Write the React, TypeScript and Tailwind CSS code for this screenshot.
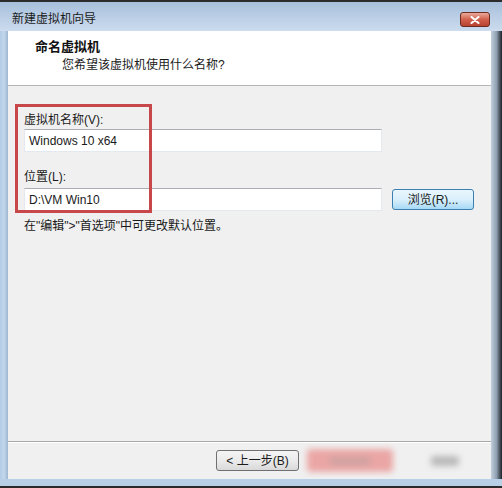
import React from "react";

const font = "font-['Liberation_Sans','Noto_Sans_CJK_SC',sans-serif]";

const TextBox = ({ value }: { value: string }) => (
  <div className="h-[23px] w-[358px] bg-white border border-[#e3e9ef] border-t-[#abadb3] flex items-center pl-[4px] text-[12px] text-[#1a1a1a]">
    {value}
  </div>
);

const App = () => {
  return (
    <div className={`w-[502px] h-[488px] flex flex-col bg-[#f0f0f0] ${font}`}>
      {/* title bar */}
      <div className="h-[31px] border-t-2 border-[#2b2b2b] bg-gradient-to-b from-[#a7bfdc] to-[#cddcee] flex items-center justify-between pl-[12px] pr-[12px]">
        <span className="text-[12px] text-[#1b1b1b] mt-[4px]">新建虚拟机向导</span>
        <div className="w-[30px] h-[15px] mt-[6px] rounded-[3px] border border-[#6e2b22] bg-gradient-to-b from-[#e9a999] via-[#d0604c] to-[#b8432f] flex items-center justify-center">
          <svg width="10" height="8" viewBox="0 0 10 8">
            <path d="M1.5 1 L8.5 7 M8.5 1 L1.5 7" stroke="#ffffff" strokeWidth="2" strokeLinecap="round" />
          </svg>
        </div>
      </div>

      <div className="flex-1 flex">
        {/* left frame */}
        <div className="w-[8px] bg-gradient-to-r from-[#b3cbe6] via-[#c3d7ec] to-[#9fb6d2]" />

        <div className="flex-1 flex flex-col">
          {/* header */}
          <div className="h-[55px] bg-white border-b border-[#b5b5b5] pt-[8px]">
            <div className="pl-[27px] text-[13px] font-bold text-[#111] leading-[16px]">命名虚拟机</div>
            <div className="pl-[54px] mt-[2px] text-[12px] text-[#1a1a1a] leading-[16px]">您希望该虚拟机使用什么名称?</div>
          </div>

          {/* body */}
          <div className="relative flex-1 px-[16px] pt-[26px] text-[12px] text-[#1a1a1a]">
            <div className="absolute left-[7px] top-[18px] w-[137px] h-[109px] border-[3px] border-[#c8474b]" />
            <div className="leading-[16px]">虚拟机名称(V):</div>
            <div className="mt-[1px]">
              <TextBox value="Windows 10 x64" />
            </div>
            <div className="leading-[16px] mt-[17px]">位置(L):</div>
            <div className="mt-[3px] flex items-center gap-[10px]">
              <TextBox value="D:\VM Win10" />
              <button className="w-[82px] h-[21px] rounded-[3px] border border-[#3c7fb1] bg-gradient-to-b from-[#eaf6fd] via-[#d9f0fc] to-[#a7d9f5] text-[12px] text-[#1a1a1a]">
                浏览(R)...
              </button>
            </div>
            <div className="leading-[16px] mt-[7px]">在"编辑"&gt;"首选项"中可更改默认位置。</div>
          </div>

          {/* button row */}
          <div className="h-[38px] border-t border-[#a8a8a8] shadow-[inset_0_1px_0_#ffffff] flex items-center pl-[208px] gap-[8px]">
            <button className="w-[83px] h-[21px] rounded-[3px] border border-[#707070] bg-gradient-to-b from-[#f4f4f4] via-[#ebebeb] to-[#d9d9d9] text-[12px] text-[#1a1a1a]">
              &lt; 上一步(B)
            </button>
            <div className="w-[86px] h-[23px] rounded-[4px] bg-[#eaa6a4] blur-[3px] flex items-center justify-center">
              <div className="w-[40px] h-[8px] bg-[#cfa2a2]" />
            </div>
            <div className="ml-[30px] w-[28px] h-[10px] rounded-[3px] bg-[#b8b8b8] blur-[3px]" />
          </div>
        </div>

        {/* right frame */}
        <div className="w-[11px] bg-gradient-to-r from-[#c2d0de] via-[#8f9fb0] to-[#1e242a]" />
      </div>

      {/* bottom frame */}
      <div className="h-[9px] bg-[#b8d0e7] border-b-2 border-[#2b2b2b]" />
    </div>
  );
};

export default App;
